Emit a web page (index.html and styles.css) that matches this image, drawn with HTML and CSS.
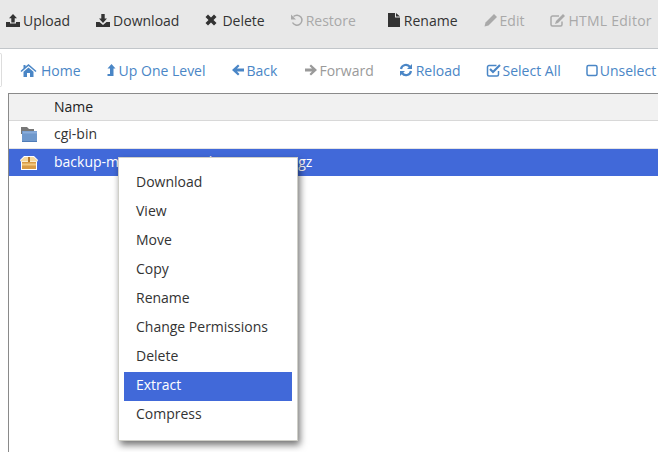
FILE: index.html
```html
<!DOCTYPE html>
<html lang="en">
<head>
<meta charset="utf-8">
<title>File Manager</title>
<link rel="stylesheet" href="styles.css">
</head>
<body>
<div class="toolbar">
  <span class="tool t-upload"><svg class="ico" viewBox="0 0 14 14"><path d="M0 9h4v1.600h6V9h4v5H0zM7 1l4 4.200H8.700V9.600H5.300V5.200H3z"/></svg>Upload</span>
  <span class="tool t-download"><svg class="ico" viewBox="0 0 14 14"><path d="M0 9h3.500L7 12l3.500-3H14v5H0zM5.300 1h3.400v4.500H11L7 10 3 5.500h2.300z"/></svg>Download</span>
  <span class="tool t-delete"><svg class="ico x" viewBox="0 0 12 12"><path d="M3 .5 6 3.500 9 .5 11.500 3 8.500 6l3 3L9 11.500l-3-3-3 3L.5 9l3-3-3-3z"/></svg>Delete</span>
  <span class="tool off t-restore"><svg class="ico" viewBox="0 0 14 14"><path class="stroke" d="M3.500 3.500A5 5 0 1 1 2.500 9.500"/><path d="M1 1.500 6 6.500H1z"/></svg>Restore</span>
  <span class="sep"></span>
  <span class="tool t-rename"><svg class="ico file" viewBox="0 0 12 14"><path d="M0 0h7v4.500h5V14H0zM8 0l4 3.500H8z"/></svg>Rename</span>
  <span class="tool off t-edit"><svg class="ico" viewBox="0 0 14 14"><path d="M10 1l3 3-8.500 8.500L0.500 13.500 1.500 9.500z"/></svg>Edit</span>
  <span class="tool off t-html"><svg class="ico wide" viewBox="0 0 16 14"><path class="stroke" d="M12 8.500V11.500A1.500 1.500 0 0 1 10.500 13H2.500A1.500 1.500 0 0 1 1 11.500V4.500A1.500 1.500 0 0 1 2.500 3H9"/><path d="M13 1l2 2-7 7-3 1 1-3z"/></svg>HTML Editor</span>
</div>
<div class="nav">
  <span class="stub"></span>
  <span class="link l-home"><svg class="ico wide" viewBox="0 0 16 14"><path d="M8 1 16 8l-1 1-7-6-7 6-1-1 3-2.700V2h2v1.600zM8 4.500l5 4.300V14H9.500v-4h-3v4H3V8.800z"/></svg>Home</span>
  <span class="link l-up"><svg class="ico thin" viewBox="0 0 9 14"><path d="M4.500 1 8.500 5.500H6.500V13H0.500V11H3V5.500H0.500z"/></svg>Up One Level</span>
  <span class="link l-back"><svg class="ico" viewBox="0 0 13 14"><path d="M6.500 1.500 8 3 5.500 5.500H12.500V8.500H5.500L8 11l-1.500 1.500L0.500 7z"/></svg>Back</span>
  <span class="link off l-fwd"><svg class="ico" viewBox="0 0 13 14"><path d="M6.500 1.500 5 3 7.500 5.500H.5V8.500H7.500L5 11l1.500 1.500L12.500 7z"/></svg>Forward</span>
  <span class="link l-reload"><svg class="ico" viewBox="0 0 14 14"><path class="stroke thick" d="M2 6A5 5 0 0 1 11 4"/><path d="M13 1V6H8z"/><path class="stroke thick" d="M12 8A5 5 0 0 1 3 10"/><path d="M1 13V8H6z"/></svg>Reload</span>
  <span class="link l-all"><svg class="ico wide" viewBox="0 0 15 14"><path class="stroke" d="M12 8V11.500A1.500 1.500 0 0 1 10.500 13H2.500A1.500 1.500 0 0 1 1 11.500V4A1.500 1.500 0 0 1 2.500 2.500H10"/><path class="stroke thick" d="M3.500 6 6.500 9 13.500 2"/></svg>Select All</span>
  <span class="link l-none"><svg class="ico box" viewBox="0 0 12 14"><rect class="stroke" x="1" y="2.500" width="10" height="10" rx="1.500"/></svg>Unselect</span>
</div>
<div class="files">
  <div class="row head"><span class="name">Name</span></div>
  <div class="row">
    <svg class="ficon" viewBox="0 0 18 16"><path fill="#777" d="M1 0h6l2 2h5v5H1z"/><path fill="#6f98cc" d="M2 4h15v11H2z"/><path fill="#8aaddb" d="M3 4.500h14v2H3z"/><path fill="#4f7cb8" d="M2 14h15v1H2z"/></svg>
    <span class="name">cgi-bin</span>
  </div>
  <div class="row selected">
    <svg class="ficon" viewBox="0 0 18 16"><path fill="#fff" d="M0 5 4 1h10l4 4-1 2v8H1V7z"/><path fill="#f5d9a0" d="M1 5 4.500 2h9L17 5v1.500H1z"/><path fill="#d99b45" d="M2 7h14v7H2z"/><path fill="#f2c880" d="M2 8.500h14v2H2z"/><path fill="#b5792c" d="M8 2h2v5H8z"/></svg>
    <span class="name">backup-migrate-site-archive-2018.tar.gz</span>
  </div>
</div>
<ul class="menu">
  <li>Download</li>
  <li>View</li>
  <li>Move</li>
  <li>Copy</li>
  <li>Rename</li>
  <li>Change Permissions</li>
  <li>Delete</li>
  <li class="active">Extract</li>
  <li>Compress</li>
</ul>
</body>
</html>
```
FILE: styles.css
```css
html, body {
  margin: 0;
  padding: 0;
  height: 452px;
  overflow: hidden;
  background: #fff;
  font-family: "Open Sans", sans-serif;
  font-size: 14px;
  color: #333;
}
.ico {
  width: 14px;
  height: 14px;
  fill: currentColor;
  margin-right: 3px;
  flex: none;
}
.ico.wide { width: 16px; }
.ico.thin { width: 9px; margin-right: 3px; }
.ico.x { width: 12px; height: 12px; margin-right: 5px; }
.ico.file { width: 12px; margin-right: 4px; }
.ico.box { width: 12px; margin-right: 2px; }
.stroke {
  fill: none;
  stroke: currentColor;
  stroke-width: 1.5;
}
.stroke.thick { stroke-width: 2.2; }
.toolbar {
  display: flex;
  align-items: center;
  height: 40px;
  padding: 0 0 8px 6px;
  background: #e8e8e8;
  border-bottom: 1px solid #c2c6ca;
  white-space: nowrap;
}
.tool {
  display: flex;
  align-items: center;
  color: #333;
  margin-right: 26px;
}
.tool.off { color: #a9a9a9; }
.t-delete { margin-right: 25px; }
.t-restore { margin-right: 13px; }
.t-restore .ico { margin-right: 2px; }
.t-edit .ico, .t-html .ico { margin-right: 2px; }
.t-html { letter-spacing: 0.25px; }
.sep {
  width: 1px;
  height: 34px;
  background: #cfcfcf;
  margin-right: 19px;
}
.nav {
  display: flex;
  align-items: center;
  height: 42px;
  padding-bottom: 2px;
  white-space: nowrap;
  overflow: hidden;
}
.stub {
  flex: none;
  width: 1px;
  height: 32px;
  margin-right: 18px;
  border: 1px solid #ddd;
  border-left: 0;
  border-radius: 0 4px 4px 0;
}
.link {
  display: flex;
  align-items: center;
  color: #4a86c6;
  margin-right: 25px;
  flex: none;
}
.link.off { color: #9a9a9a; }
.l-home { margin-right: 26px; }
.l-home .ico { width: 17px; margin-right: 4px; }
.l-back { margin-right: 27px; }
.l-back .ico { margin-right: 2px; }
.l-fwd .ico { margin-right: 1px; }
.l-reload .ico { margin-right: 3px; }
.l-all .ico { margin-right: 1px; }
.l-none { margin-right: 0; }
.files {
  margin-left: 8px;
  height: 359px;
  border-top: 1px solid #8a8a8a;
  border-left: 1px solid #8a8a8a;
}
.row {
  display: flex;
  align-items: center;
  height: 27px;
  border-bottom: 1px solid #e4e4e4;
  color: #333;
  white-space: nowrap;
}
.head {
  height: 26px;
  background: #f1f1f1;
  border-bottom: 1px solid #d8d8d8;
  color: #222;
}
.selected {
  background: #4169d9;
  color: #fff;
  border-bottom: 0;
}
.ficon {
  width: 18px;
  height: 16px;
  margin-left: 11px;
  flex: none;
}
.name {
  margin-left: 16px;
  margin-bottom: 2px;
}
.head .name { margin-left: 45px; }
.menu {
  position: absolute;
  left: 118px;
  top: 157px;
  width: 180px;
  height: 284px;
  box-sizing: border-box;
  margin: 0;
  padding: 11px 5px 0;
  list-style: none;
  background: #fff;
  border: 1px solid #cfcfc8;
  box-shadow: 2px 4px 7px rgba(0, 0, 0, 0.55);
}
.menu li {
  height: 29px;
  line-height: 25px;
  padding-left: 12px;
  color: #333;
}
.menu li.active {
  background: #4169d9;
  color: #fff;
}
```
